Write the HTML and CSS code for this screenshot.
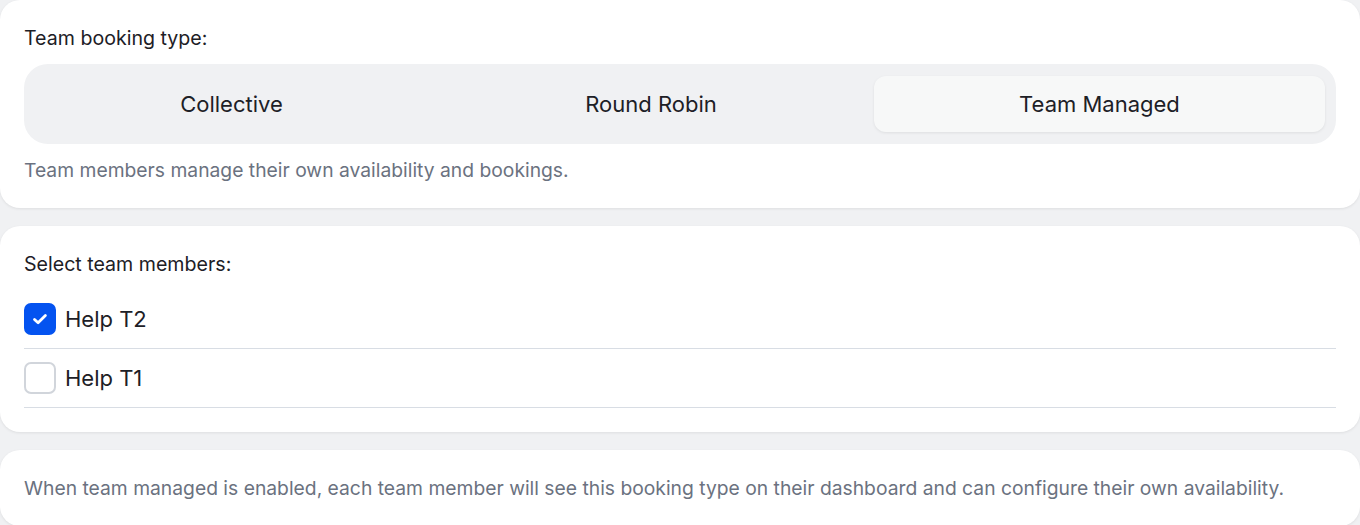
FILE: index.html
```html
<!DOCTYPE html>
<html lang="en">
<head>
  <meta charset="UTF-8">
  <title>Team booking</title>
  <link rel="stylesheet" href="styles.css">
</head>
<body>
  <div class="card">
    <h3 class="label">Team booking type:</h3>
    <div class="segmented">
      <button class="segment">Collective</button>
      <button class="segment">Round Robin</button>
      <button class="segment active">Team Managed</button>
    </div>
    <p class="hint">Team members manage their own availability and bookings.</p>
  </div>

  <div class="card">
    <h3 class="label">Select team members:</h3>
    <label class="member">
      <span class="box checked">
        <svg width="20" height="20" viewBox="0 0 20 20"><path d="M4.5 10.4l3.6 3.4 7.3-7.4" fill="none" stroke="#fff" stroke-width="2.8" stroke-linecap="round" stroke-linejoin="round"/></svg>
      </span>
      <span class="name">Help T2</span>
    </label>
    <label class="member">
      <span class="box"></span>
      <span class="name">Help T1</span>
    </label>
  </div>

  <div class="card">
    <p class="hint flush">When team managed is enabled, each team member will see this booking type on their dashboard and can configure their own availability.</p>
  </div>
</body>
</html>
```

FILE: styles.css
```css
body {
  margin: 0;
  background-color: #f0f1f3;
  font-family: Inter, "Noto Sans", sans-serif;
  color: #1d2026;
}
.card {
  background-color: #fff;
  border-radius: 20px;
  padding: 24px;
  margin-bottom: 18px;
  box-shadow: 0 1px 3px rgba(0, 0, 0, 0.08);
}
.label {
  margin: 0 0 12px;
  font-size: 19.6px;
  font-weight: 400;
  line-height: 28px;
  color: #1d2026;
}
.segmented {
  display: flex;
  gap: 12px;
  padding: 12px 11px;
  background-color: #f0f1f3;
  border-radius: 24px;
}
.segment {
  flex: 1 1 auto;
  height: 56px;
  border: none;
  border-radius: 12px;
  background: transparent;
  font-family: inherit;
  font-size: 22px;
  color: #1d2026;
}
.segment.active {
  background-color: #f7f8f8;
  box-shadow: 0 1px 3px rgba(0, 0, 0, 0.08);
}
.hint {
  margin: 12px 0 0;
  font-size: 19.3px;
  line-height: 28px;
  color: #6b7280;
}
.hint.flush {
  margin: 0;
}
.member {
  display: flex;
  align-items: center;
  gap: 9px;
  padding: 13px 0;
  border-bottom: 1px solid #d8dde4;
}
.box {
  width: 32px;
  height: 32px;
  box-sizing: border-box;
  border: 2px solid #d1d5db;
  border-radius: 7px;
  display: flex;
  align-items: center;
  justify-content: center;
}
.box.checked {
  background-color: #0453f0;
  border-color: #0453f0;
}
.name {
  font-size: 22px;
  line-height: 32px;
}
```
